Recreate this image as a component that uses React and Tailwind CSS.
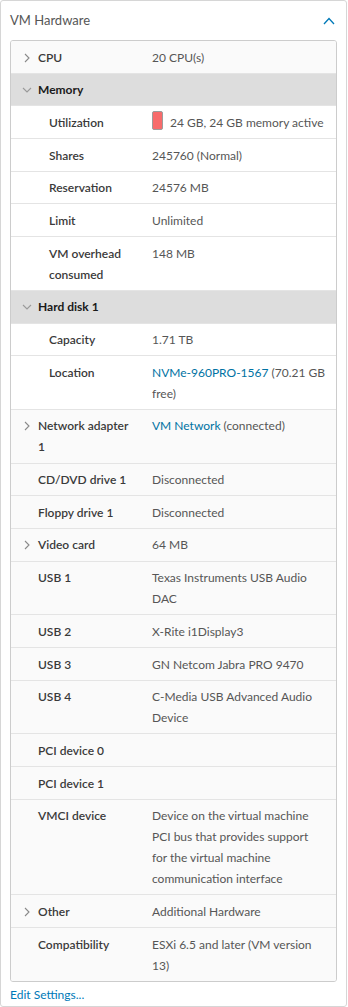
import React from 'react';

const Chevron = ({ open }) =>
    open ? (
        <svg width="10" height="6" viewBox="0 0 10 6" className="shrink-0">
            <path d="M1 1l4 4 4-4" fill="none" stroke="#9a9a9a" strokeWidth="1.1" />
        </svg>
    ) : (
        <svg width="6" height="10" viewBox="0 0 6 10" className="shrink-0">
            <path d="M1 1l4 4-4 4" fill="none" stroke="#8a8a8a" strokeWidth="1.1" />
        </svg>
    );

const rows = [
    { label: 'CPU', value: '20 CPU(s)', chevron: 'closed' },
    { label: 'Memory', header: true },
    { label: 'Utilization', value: '24 GB, 24 GB memory active', sub: true, bar: true },
    { label: 'Shares', value: '245760 (Normal)', sub: true },
    { label: 'Reservation', value: '24576 MB', sub: true },
    { label: 'Limit', value: 'Unlimited', sub: true },
    { label: 'VM overhead consumed', value: '148 MB', sub: true },
    { label: 'Hard disk 1', header: true },
    { label: 'Capacity', value: '1.71 TB', sub: true },
    { label: 'Location', link: 'NVMe-960PRO-1567', value: ' (70.21 GB', rest: 'free)', sub: true },
    { label: 'Network adapter 1', link: 'VM Network', value: ' (connected)', chevron: 'closed' },
    { label: 'CD/DVD drive 1', value: 'Disconnected' },
    { label: 'Floppy drive 1', value: 'Disconnected' },
    { label: 'Video card', value: '64 MB', chevron: 'closed' },
    { label: 'USB 1', value: 'Texas Instruments USB Audio DAC' },
    { label: 'USB 2', value: 'X-Rite i1Display3' },
    { label: 'USB 3', value: 'GN Netcom Jabra PRO 9470' },
    { label: 'USB 4', value: 'C-Media USB Advanced Audio Device' },
    { label: 'PCI device 0', value: '' },
    { label: 'PCI device 1', value: '' },
    { label: 'VMCI device', value: 'Device on the virtual machine PCI bus that provides support for the virtual machine communication interface' },
    { label: 'Other', value: 'Additional Hardware', chevron: 'closed' },
    { label: 'Compatibility', value: 'ESXi 6.5 and later (VM version 13)', last: true },
];

const Row = ({ row }) => {
    const bg = row.header ? 'bg-[#dddddd]' : row.sub ? 'bg-white' : 'bg-[#fafafa]';
    const border = row.last ? '' : 'border-b border-[#e4e4e4]';

    if (row.header) {
        return (
            <div className={`flex items-start ${bg} ${border} pt-[5.5px] pb-[5.2px] leading-[21px]`}>
                <div className="w-[27px] flex justify-start pl-[11px] pt-[8px]">
                    <Chevron open />
                </div>
                <div className="font-bold text-[#1a1a1a]">{row.label}</div>
            </div>
        );
    }

    return (
        <div className={`flex items-start ${bg} ${border} pt-[5.5px] pb-[5.2px] leading-[21px]`}>
            <div className={`flex items-start w-[141px] shrink-0 pr-[18px] ${row.sub ? 'pl-[38px]' : 'pl-[13px]'}`}>
                {!row.sub && (
                    <div className="w-[14px] shrink-0 pt-[6px]">
                        {row.chevron && <Chevron />}
                    </div>
                )}
                <div className="font-semibold text-[#3a3a3a]">{row.label}</div>
            </div>
            <div className="flex-1 pr-[12px] text-[#565656] flex items-start">
                {row.bar && (
                    <span className="mt-[-1px] mr-[7px] inline-block w-[11px] h-[19px] shrink-0 rounded-[2px] border border-[#9c9c9c] bg-[#f76b6b]"></span>
                )}
                {row.rest ? (
                    <div>
                        <div className="whitespace-nowrap">
                            <span className="text-[#0072a3]">{row.link}</span>
                            {row.value}
                        </div>
                        <div>{row.rest}</div>
                    </div>
                ) : (
                    <span>
                        {row.link && <span className="text-[#0072a3]">{row.link}</span>}
                        {row.value}
                    </span>
                )}
            </div>
        </div>
    );
};

const App = () => {
    return (
        <div className="w-[348px] bg-white" style={{ fontFamily: 'Lato, "Open Sans", sans-serif' }}>
            <div className="w-[347px] border border-[#d6d6d6] rounded-[3px] px-[9px] text-[12px]">
                <div className="flex items-center justify-between h-[39px] pr-[2px]">
                    <span className="text-[13px] text-[#565656]">VM Hardware</span>
                    <svg width="12" height="8" viewBox="0 0 12 8">
                        <path d="M1 7l5-5.5 5 5.5" fill="none" stroke="#0079b8" strokeWidth="1.3" />
                    </svg>
                </div>
                <div className="border border-[#cccccc] rounded-[3px] overflow-hidden">
                    {rows.map((row, i) => (
                        <Row key={i} row={row} />
                    ))}
                </div>
                <div className="leading-[21px] pt-[2px] pb-[1px] text-[#0079b8]">Edit Settings...</div>
            </div>
        </div>
    );
};

export default App;
